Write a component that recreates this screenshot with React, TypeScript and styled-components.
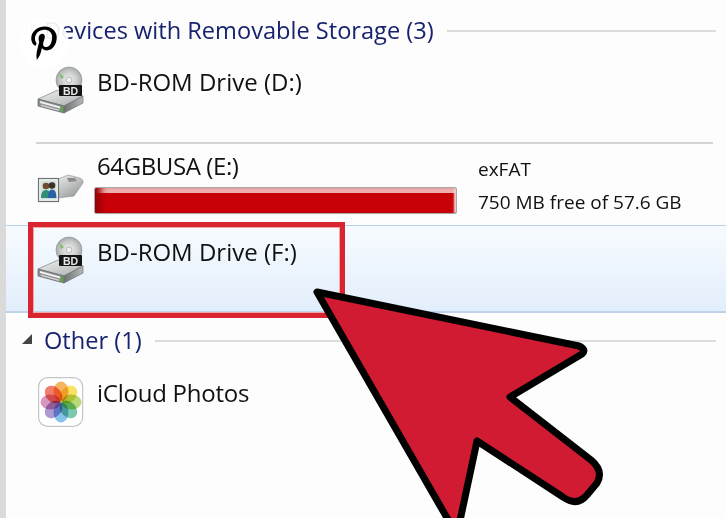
import React from "react";
import styled, { createGlobalStyle } from "styled-components";
import { FaPinterestP } from "react-icons/fa";

const Global = createGlobalStyle`
  html, body { margin: 0; padding: 0; background: #fdfdfd; }
`;

const Page = styled.div`
  position: relative;
  box-sizing: border-box;
  width: 726px;
  height: 518px;
  overflow: hidden;
  padding-top: 16px;
  background: #fdfdfd;
  color: #111111;
  font-family: "Open Sans", "Noto Sans", sans-serif;
  font-size: 24px;
  border-left: 6px solid #dadada;
`;

const EdgeLine = styled.div`
  position: absolute;
  left: -4px;
  top: 0;
  bottom: 0;
  width: 2px;
  background: #a9a9a9;
`;

const GroupHeader = styled.div<{ $top?: number }>`
  display: flex;
  align-items: center;
  height: 30px;
  margin-top: ${(p) => p.$top ?? 0}px;
  padding-left: 16px;
  padding-right: 10px;
`;

const Caret = styled.svg`
  flex: none;
  width: 10px;
  height: 10px;
  margin-right: 12px;
  margin-bottom: 4px;
`;

const GroupTitle = styled.span`
  color: #17236f;
  font-size: 23.6px;
  margin-top: -2px;
  white-space: nowrap;
`;

const GroupLine = styled.div`
  flex: 1;
  height: 2px;
  margin-left: 13px;
  background: #dcdcdc;
`;

const Tile = styled.div<{ $h: number; $pt: number }>`
  display: flex;
  align-items: flex-start;
  box-sizing: border-box;
  height: ${(p) => p.$h}px;
  padding: ${(p) => p.$pt}px 0 0 30px;
`;

const SelectedTile = styled(Tile)`
  position: relative;
  background: linear-gradient(#f7fbff, #e2eefb);
  border-top: 1px solid #b9d1e8;
  border-bottom: 2px solid #bfd3e8;
`;

const IconSlot = styled.div<{ $top?: number }>`
  flex: none;
  width: 50px;
  height: 50px;
  margin-top: ${(p) => p.$top ?? 0}px;
  margin-right: 11px;
`;

const TileText = styled.div<{ $tight?: boolean }>`
  line-height: 32px;
  white-space: nowrap;
  letter-spacing: ${(p) => (p.$tight ? "-0.25px" : "0")};
`;

const TileMain = styled.div`
  display: flex;
  flex-direction: column;
`;

const Name = styled.div`
  line-height: 30px;
  white-space: nowrap;
  letter-spacing: -0.4px;
`;

const CapacityBar = styled.div`
  box-sizing: border-box;
  width: 363px;
  height: 27px;
  margin-top: 6px;
  margin-left: -3px;
  border: 1px solid #a8a8a8;
  border-radius: 2px;
  background: linear-gradient(#f0b0b0 0 18%, #c80008 22% 100%);
  box-shadow: inset 10px 0 6px -4px #9a0006, inset -4px 0 2px -2px #f4d0d0;
`;

const Details = styled.div`
  margin-left: 21px;
  padding-top: 2px;
  font-size: 19px;
  line-height: 33px;
  white-space: nowrap;
`;

const Separator = styled.div`
  height: 2px;
  margin: 0 13px 0 30px;
  background: #d4d4d4;
`;

const Highlight = styled.div`
  position: absolute;
  left: 22px;
  top: -4px;
  width: 317px;
  height: 96px;
  box-sizing: border-box;
  border: 5px solid #d9252f;
  outline: 1px solid #f0a8a8;
  outline-offset: -6px;
`;

const PinBadge = styled.div`
  position: absolute;
  left: 13px;
  top: 18px;
  width: 50px;
  height: 50px;
  border-radius: 50%;
  background: rgba(255, 255, 255, 0.93);
  color: #000000;
  display: flex;
  align-items: center;
  justify-content: center;
  font-size: 34px;
`;

const ArrowSvg = styled.svg`
  position: absolute;
  left: -6px;
  top: 0;
  width: 726px;
  height: 518px;
`;

function OpticalDrive({ id }: { id: string }) {
  return (
    <svg width="50" height="50" viewBox="0 0 50 50">
      <defs>
        <radialGradient id={`${id}d`} cx="0.5" cy="0.5" r="0.6">
          <stop offset="0" stopColor="#f4f4f4" />
          <stop offset="0.6" stopColor="#c4c6c6" />
          <stop offset="1" stopColor="#8f9494" />
        </radialGradient>
        <linearGradient id={`${id}t`} x1="0" y1="0" x2="1" y2="1">
          <stop offset="0" stopColor="#f2f2f2" />
          <stop offset="1" stopColor="#a8acac" />
        </linearGradient>
        <linearGradient id={`${id}s`} x1="0" y1="0" x2="1" y2="0">
          <stop offset="0" stopColor="#6d7171" />
          <stop offset="1" stopColor="#b4b7b7" />
        </linearGradient>
      </defs>
      <circle cx="33" cy="14" r="13" fill={`url(#${id}d)`} stroke="#8c9090" strokeWidth="0.6" />
      <path d="M23 7 L28 11 L25 13 Z" fill="#7cc06a" />
      <circle cx="33" cy="14" r="3" fill="#eeeeee" stroke="#9a9a9a" strokeWidth="0.6" />
      <path d="M2 33 L22 24 L47 30 L28 40 Z" fill={`url(#${id}t)`} stroke="#7d8181" strokeWidth="0.7" />
      <path d="M2 33 L28 40 V47 L2 40 Z" fill="#8b8f8f" stroke="#5f6363" strokeWidth="0.7" />
      <path d="M4 35 L24 40.5 V42.5 L4 37 Z" fill="#f1f1f1" />
      <path d="M5 38.5 L23 43.5 V45 L5 40 Z" fill="#d2d2d2" />
      <path d="M25 40.5 L27 41 V46 L25 45.5 Z" fill="#4fae3a" />
      <path d="M28 40 L47 30 V37 L28 47 Z" fill={`url(#${id}s)`} stroke="#6f7373" strokeWidth="0.7" />
      <rect x="23" y="19" width="23" height="11" rx="1" fill="#161616" />
      <text x="34.5" y="28.5" textAnchor="middle" fontFamily="Liberation Sans, sans-serif" fontWeight="700" fontSize="10.5" fill="#e8e8e8">BD</text>
    </svg>
  );
}

function UsbDrive() {
  return (
    <svg width="50" height="30" viewBox="0 0 50 30">
      <defs>
        <linearGradient id="usb" x1="0" y1="0" x2="0.7" y2="1">
          <stop offset="0" stopColor="#ececec" />
          <stop offset="1" stopColor="#979b9b" />
        </linearGradient>
      </defs>
      <path d="M22 5 L32 1 L44 4 Q48 6 47 9 L38 22 L22 24 Z" fill="url(#usb)" stroke="#8d8d8d" strokeWidth="0.6" />
      <path d="M31 4 L39 4 L41 7 L33 8 Z" fill="#8b8b8b" />
      <rect x="2.5" y="4.5" width="20" height="23" fill="#f3f6f2" stroke="#6f7472" strokeWidth="1.2" />
      <rect x="4.5" y="6.5" width="16" height="19" fill="#cfe0dc" />
      <circle cx="10" cy="12" r="3.3" fill="#6e4a32" />
      <circle cx="16" cy="11.5" r="3.3" fill="#3c3026" />
      <path d="M5 24 Q5 16 10 16 Q15 16 15 24 Z" fill="#2f8f78" />
      <path d="M12 24 Q12 15.5 16 15.5 Q20.5 15.5 20.5 24 Z" fill="#2a62a8" />
    </svg>
  );
}

const PETALS = [
  ["#f5a43c", 0],
  ["#f5dc3e", 45],
  ["#a9d15c", 90],
  ["#62bd9c", 135],
  ["#6cb4e6", 180],
  ["#9c82c8", 225],
  ["#cf80ae", 270],
  ["#f0604c", 315],
] as const;

function PhotosIcon() {
  return (
    <svg width="50" height="50" viewBox="0 0 50 50">
      <rect x="2.6" y="0.6" width="44" height="48.8" rx="9" fill="#ffffff" stroke="#c6c6c6" strokeWidth="1.2" />
      {PETALS.map(([color, angle]) => (
        <ellipse
          key={angle}
          cx="25"
          cy="14.5"
          rx="7.5"
          ry="10"
          fill={color}
          fillOpacity="0.82"
          style={{ mixBlendMode: "multiply" }}
          transform={`rotate(${angle} 25 25)`}
        />
      ))}
    </svg>
  );
}

export default function App() {
  return (
    <Page>
      <Global />
      <EdgeLine />
      <GroupHeader>
        <Caret viewBox="0 0 10 10"><path d="M0.5 9.5 L9.5 9.5 L9.5 0.5 Z" fill="none" stroke="#a8a8a8" /></Caret>
        <GroupTitle>Devices with Removable Storage (3)</GroupTitle>
        <GroupLine />
      </GroupHeader>
      <Tile $h={96} $pt={20}>
        <IconSlot><OpticalDrive id="a" /></IconSlot>
        <TileText>BD-ROM Drive (D:)</TileText>
      </Tile>
      <Separator />
      <Tile $h={81} $pt={7}>
        <IconSlot $top={23}><UsbDrive /></IconSlot>
        <TileMain>
          <Name>64GBUSA (E:)</Name>
          <CapacityBar />
        </TileMain>
        <Details>
          <div>exFAT</div>
          <div>750 MB free of 57.6 GB</div>
        </Details>
      </Tile>
      <SelectedTile $h={88} $pt={10}>
        <IconSlot><OpticalDrive id="b" /></IconSlot>
        <TileText>BD-ROM Drive (F:)</TileText>
        <Highlight />
      </SelectedTile>
      <GroupHeader $top={13}>
        <Caret viewBox="0 0 10 10"><path d="M0 10 L10 10 L10 0 Z" fill="#444" /></Caret>
        <GroupTitle>Other (1)</GroupTitle>
        <GroupLine />
      </GroupHeader>
      <Tile $h={70} $pt={21}>
        <IconSlot><PhotosIcon /></IconSlot>
        <TileText $tight>iCloud Photos</TileText>
      </Tile>
      <PinBadge><FaPinterestP /></PinBadge>
      <ArrowSvg viewBox="0 0 726 518">
        <path
          d="M317 292 L579 346 Q587 350 582 354 L510 397 L591 460 Q604 471 597 483 L587 495 Q577 507 563 497 L477 441 L458 530 L454 530 Z"
          fill="#d01b33"
          stroke="#000"
          strokeWidth="7"
          strokeLinejoin="round"
        />
      </ArrowSvg>
    </Page>
  );
}
